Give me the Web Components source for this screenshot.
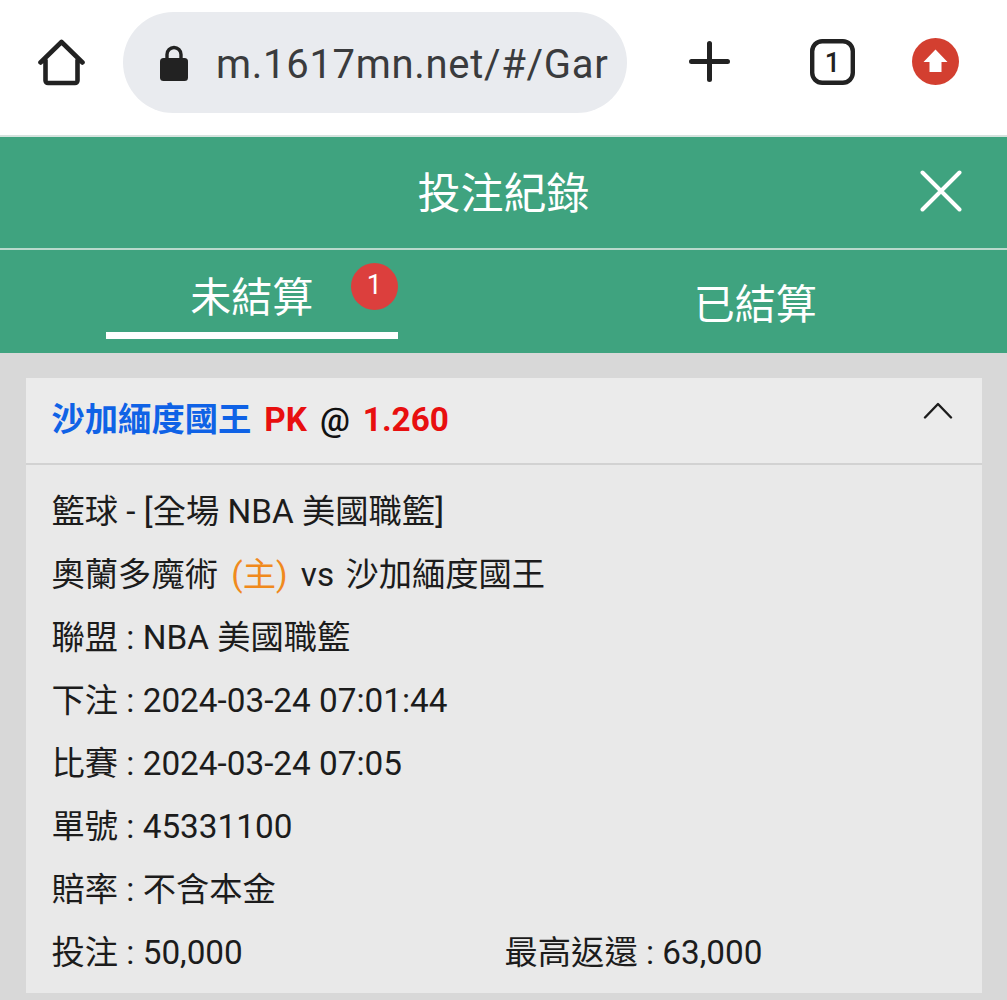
<!DOCTYPE html>
<html lang="zh-Hant">
<head>
<meta charset="utf-8">
<title>投注紀錄</title>
<style>
  html, body { margin: 0; padding: 0; background: #d8d8d8; }
  body { width: 1007px; height: 1000px; overflow: hidden; font-family: Roboto, "Noto Sans CJK TC", sans-serif; }
</style>
</head>
<body>
<browser-bar url="m.1617mn.net/#/Gar"></browser-bar>
<bet-header title="投注紀錄"></bet-header>
<bet-tabs></bet-tabs>
<bet-card>
  <span slot="team">沙加緬度國王</span>
  <span slot="pick">PK</span>
  <span slot="odds">1.260</span>
  <bet-row>籃球 - [全場 NBA 美國職籃]</bet-row>
  <bet-row>奧蘭多魔術 <span style="color:#f08a1d;margin:0 5px 0 5px">(主)</span> vs <span style="margin-left:3px">沙加緬度國王</span></bet-row>
  <bet-row>聯盟 : NBA 美國職籃</bet-row>
  <bet-row>下注 : 2024-03-24 07:01:44</bet-row>
  <bet-row>比賽 : 2024-03-24 07:05</bet-row>
  <bet-row>單號 : 45331100</bet-row>
  <bet-row>賠率 : 不含本金</bet-row>
  <bet-row split><span>投注 : 50,000</span><span>最高返還 : 63,000</span></bet-row>
</bet-card>

<script>
class BrowserBar extends HTMLElement {
  constructor() {
    super();
    this.shadowDOM = this.attachShadow({ mode: 'open' });
  }

  connectedCallback() {
    this.render();
  }

  render() {
    this.shadowDOM.innerHTML = `
      <style>
        :host {
          display: flex;
          box-sizing: border-box;
          height: 137px;
          align-items: center;
          padding: 0 48px 10px 38px;
          background: #fff;
          border-bottom: 2px solid #d5e3de;
        }
        svg { display: block; flex: none; }
        .address {
          display: flex;
          box-sizing: border-box;
          align-items: center;
          width: 504px;
          height: 101px;
          margin: 0 62px 0 38px;
          padding: 0 20px 0 37px;
          border-radius: 51px;
          background: #e9ebef;
        }
        .url {
          margin-left: 28px;
          padding-top: 4px;
          font: 40px/48px Roboto, sans-serif;
          letter-spacing: 0.7px;
          color: #3a3b3d;
          white-space: nowrap;
        }
        .plus { margin: -2px 80px 0 0; }
        .tabs { margin: -2px 57px 0 0; }
        .up { margin-top: -2px; }
      </style>
      <svg width="47" height="47" viewBox="0 0 47 47" fill="none" stroke="#222" stroke-width="4.6" stroke-linejoin="round" stroke-linecap="round">
        <path d="M2.500 23.500 23.500 3 44.500 23.500M7.500 21V41.500a2.500 2.500 0 0 0 2.500 2.500H37a2.500 2.500 0 0 0 2.500-2.500V21"/>
      </svg>
      <div class="address">
        <svg width="28" height="36" viewBox="0 0 28 36">
          <path fill="none" stroke="#222" stroke-width="3.4" d="M7 15V9.500a7 7 0 0 1 14 0V15"/>
          <rect y="13" width="28" height="23" rx="3.500" fill="#222"/>
        </svg>
        <div class="url">${this.getAttribute('url')}</div>
      </div>
      <svg class="plus" width="41" height="41" viewBox="0 0 41 41" stroke="#222" stroke-width="5" stroke-linecap="round">
        <path d="M20.500 2.500V38.500M2.500 20.500H38.500"/>
      </svg>
      <svg class="tabs" width="45" height="46" viewBox="0 0 45 46">
        <rect x="2.200" y="2.200" width="40.600" height="41.600" rx="10" fill="none" stroke="#222" stroke-width="4.400"/>
        <text x="22.500" y="33" text-anchor="middle" font-family="Roboto, sans-serif" font-size="27" font-weight="500" fill="#222">1</text>
      </svg>
      <svg class="up" width="47" height="47" viewBox="0 0 47 47">
        <circle cx="23.500" cy="23.500" r="23.500" fill="#d33f30"/>
        <path fill="#fff" d="M23.500 11.500 35.500 24H29.500V34H17.500V24H11.500Z"/>
      </svg>
    `;
  }
}

class BetHeader extends HTMLElement {
  constructor() {
    super();
    this.shadowDOM = this.attachShadow({ mode: 'open' });
  }

  connectedCallback() {
    this.render();
  }

  render() {
    this.shadowDOM.innerHTML = `
      <style>
        :host {
          display: flex;
          position: relative;
          box-sizing: border-box;
          height: 113px;
          align-items: center;
          justify-content: center;
          padding-bottom: 5px;
          background: #3fa37f;
          border-bottom: 2px solid #b9d9cc;
          color: #fff;
          font: 43px/56px "Noto Sans CJK TC", sans-serif;
        }
        svg { position: absolute; left: 920px; top: 33px; }
      </style>
      <span>${this.getAttribute('title')}</span>
      <svg width="42" height="42" viewBox="0 0 42 42" stroke="#fff" stroke-width="4" stroke-linecap="round">
        <path d="M2.500 2.500 39.500 39.500M39.500 2.500 2.500 39.500"/>
      </svg>
    `;
  }
}

class BetTabs extends HTMLElement {
  constructor() {
    super();
    this.shadowDOM = this.attachShadow({ mode: 'open' });
  }

  connectedCallback() {
    this.render();
  }

  render() {
    this.shadowDOM.innerHTML = `
      <style>
        :host {
          display: grid;
          grid-template-columns: 1fr 1fr;
          height: 103px;
          background: #3fa37f;
          color: #fff;
          font: 41px/56px "Noto Sans CJK TC", sans-serif;
        }
        .tab { display: flex; justify-content: center; }
        .label { position: relative; box-sizing: border-box; text-align: center; }
        .active {
          width: 292px;
          height: 89px;
          padding-top: 16px;
          border-bottom: 7px solid #fff;
        }
        .idle { padding-top: 23px; }
        .badge {
          position: absolute;
          left: 245px;
          top: 13px;
          width: 47px;
          height: 47px;
          border-radius: 50%;
          background: #dc3f3d;
          font: 27px/45px Roboto, sans-serif;
        }
      </style>
      <div class="tab"><div class="label active">未結算<span class="badge">1</span></div></div>
      <div class="tab"><div class="label idle">已結算</div></div>
    `;
  }
}

class BetCard extends HTMLElement {
  constructor() {
    super();
    this.shadowDOM = this.attachShadow({ mode: 'open' });
  }

  connectedCallback() {
    this.render();
  }

  render() {
    this.shadowDOM.innerHTML = `
      <style>
        :host {
          display: block;
          box-sizing: border-box;
          width: 956px;
          height: 615px;
          margin: 25px 0 0 26px;
          background: #e9e9e9;
          color: #1c1c1c;
          font: 33.300px/63px Roboto, "Noto Sans CJK TC", sans-serif;
        }
        .head {
          display: flex;
          box-sizing: border-box;
          height: 87px;
          align-items: center;
          gap: 13px;
          padding: 0 26px 2px 25.500px;
          border-bottom: 2px solid #d2d2d2;
          font-weight: 700;
          background: #ebebeb;
        }
        .team { color: #0f62e6; }
        .pick { color: #e80f0f; }
        .at { color: #111; font-weight: 500; }
        svg { margin: -19px 3px 0 auto; }
        .body { padding: 14.500px 26px 0 25.500px; }
      </style>
      <div class="head">
        <span class="team"><slot name="team"></slot></span>
        <span class="pick"><slot name="pick"></slot></span>
        <span class="at">@</span>
        <span class="pick"><slot name="odds"></slot></span>
        <svg width="30" height="17" viewBox="0 0 30 17" fill="none" stroke="#1c1c1c" stroke-width="2.400" stroke-linecap="round" stroke-linejoin="round">
          <path d="M2 15.500 15 2 28 15.500"/>
        </svg>
      </div>
      <div class="body"><slot></slot></div>
    `;
  }
}

class BetRow extends HTMLElement {
  constructor() {
    super();
    this.shadowDOM = this.attachShadow({ mode: 'open' });
  }

  connectedCallback() {
    this.shadowDOM.innerHTML = `
      <style>
        :host { display: block; height: 63px; white-space: nowrap; }
        :host([split]) { display: grid; grid-template-columns: 453px 1fr; }
      </style>
      <slot></slot>
    `;
  }
}

customElements.define('browser-bar', BrowserBar);
customElements.define('bet-header', BetHeader);
customElements.define('bet-tabs', BetTabs);
customElements.define('bet-card', BetCard);
customElements.define('bet-row', BetRow);
</script>
</body>
</html>
